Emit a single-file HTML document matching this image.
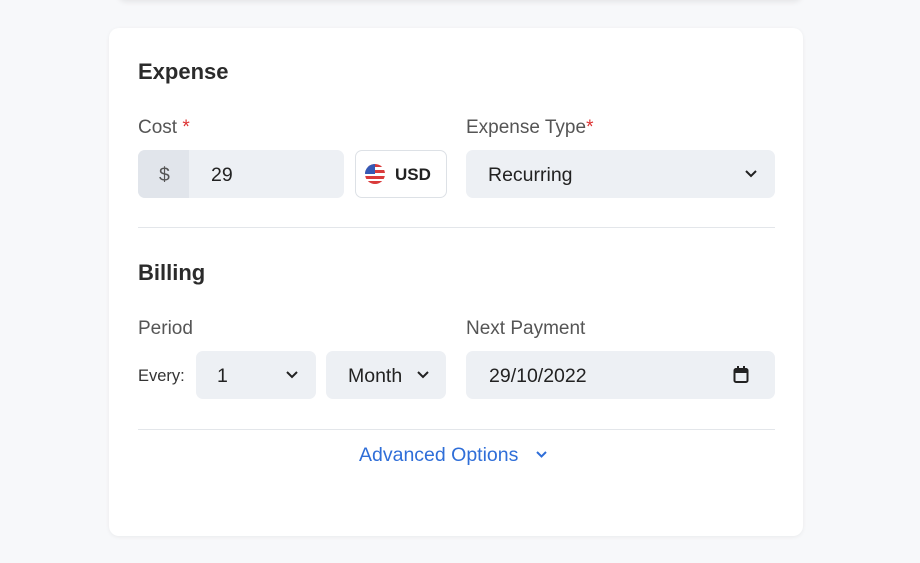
<!DOCTYPE html>
<html><head><style>
body{margin:0;width:920px;height:563px;background:#f7f8fa;font-family:"Liberation Sans",sans-serif;position:relative;overflow:hidden;color:#2d2d2d}
.a{position:absolute}
.card{left:109px;top:28px;width:694px;height:508px;background:#fff;border-radius:10px;box-shadow:0 1px 4px rgba(0,0,0,.06)}
.top{left:118px;top:-20px;width:684px;height:20px;background:#fff;box-shadow:0 2px 6px rgba(0,0,0,.08);border-radius:8px}
.h{font-size:22px;font-weight:bold;color:#2b2b2b}
.l{font-size:19px;color:#555}
.f{background:#edf0f4;border-radius:7px;height:48px}
.t{font-size:19.5px;color:#222;line-height:50px}
.hr{height:1px;background:#e3e6ea;left:138px;width:637px}
svg.c{position:absolute}
</style></head><body>
<div class="a top"></div>
<div class="a card"></div>
<div class="a h" style="left:138px;top:59px">Expense</div>
<div class="a l" style="left:138px;top:117px">Cost <span style="color:#d33">*</span></div>
<div class="a f" style="left:138px;top:150px;width:206px"></div>
<div class="a" style="left:138px;top:150px;width:51px;height:48px;background:#e1e5eb;border-radius:7px 0 0 7px"></div>
<div class="a t" style="left:159px;top:150px;color:#555">$</div>
<div class="a t" style="left:211px;top:150px">29</div>
<div class="a" style="left:355px;top:150px;width:90px;height:46px;border:1px solid #dde1e6;border-radius:7px;background:#fff"></div>
<svg class="c" style="left:365px;top:164px" width="20" height="20" viewBox="0 0 20 20"><clipPath id="cp"><circle cx="10" cy="10" r="10"/></clipPath><g clip-path="url(#cp)"><rect width="20" height="20" fill="#fff"/><rect y="0" width="20" height="3" fill="#d93a3a"/><rect y="6" width="20" height="3" fill="#d93a3a"/><rect y="12" width="20" height="3" fill="#d93a3a"/><rect y="17" width="20" height="3" fill="#d93a3a"/><rect width="10" height="10" fill="#3559b5"/></g></svg>
<div class="a" style="left:395px;top:151px;font-size:17px;font-weight:bold;line-height:48px;color:#222">USD</div>
<div class="a l" style="left:466px;top:117px">Expense Type<span style="color:#d33">*</span></div>
<div class="a f" style="left:466px;top:150px;width:309px"></div>
<div class="a t" style="left:488px;top:150px">Recurring</div>
<svg class="c" style="left:744px;top:168px" width="14" height="12"><path d="M2 3l5 5 5-5" stroke="#222" stroke-width="2" fill="none"/></svg>
<div class="a hr" style="top:227px"></div>
<div class="a h" style="left:138px;top:260px">Billing</div>
<div class="a l" style="left:138px;top:318px">Period</div>
<div class="a l" style="left:466px;top:318px">Next Payment</div>
<div class="a" style="left:138px;top:352px;font-size:16.5px;line-height:48px;color:#333">Every:</div>
<div class="a f" style="left:196px;top:351px;width:120px"></div>
<div class="a t" style="left:217px;top:351px">1</div>
<svg class="c" style="left:285px;top:369px" width="14" height="12"><path d="M2 3l5 5 5-5" stroke="#222" stroke-width="2" fill="none"/></svg>
<div class="a f" style="left:326px;top:351px;width:120px"></div>
<div class="a t" style="left:348px;top:351px">Month</div>
<svg class="c" style="left:416px;top:369px" width="14" height="12"><path d="M2 3l5 5 5-5" stroke="#222" stroke-width="2" fill="none"/></svg>
<div class="a f" style="left:466px;top:351px;width:309px"></div>
<div class="a t" style="left:489px;top:351px">29/10/2022</div>
<svg class="c" style="left:733px;top:366px" width="16" height="18"><rect x="1.5" y="3" width="13" height="13" rx="1.5" fill="none" stroke="#222" stroke-width="2"/><rect x="1.5" y="3" width="13" height="4" fill="#222"/><rect x="4" y="0" width="2" height="3" fill="#222"/><rect x="10" y="0" width="2" height="3" fill="#222"/></svg>
<div class="a hr" style="top:429px"></div>
<div class="a" style="left:359px;top:444px;font-size:19.5px;color:#2f6ed8">Advanced Options</div>
<svg class="c" style="left:535px;top:449px" width="13" height="11"><path d="M2 3l4.5 4.5L11 3" stroke="#2f6ed8" stroke-width="2" fill="none"/></svg>
</body></html>
